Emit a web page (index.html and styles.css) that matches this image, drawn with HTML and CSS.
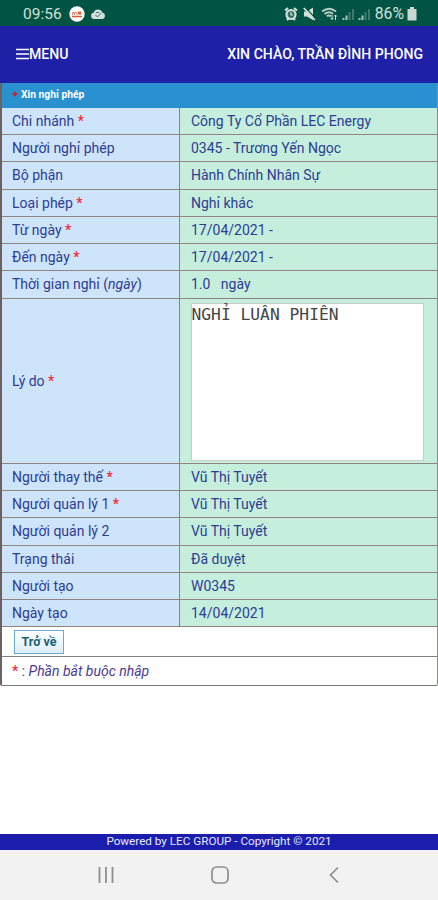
FILE: index.html
```html
<!DOCTYPE html>
<html lang="vi">
<head>
<meta charset="utf-8">
<title>Xin nghỉ phép</title>
<link rel="stylesheet" href="styles.css">
</head>
<body>
<div class="status">
  <span class="clock">09:56</span>
  <svg class="app" width="16" height="16" viewBox="0 0 16 16"><circle cx="8" cy="8" r="7.7" fill="#fff"/><path d="M3.500 9V6.500h2V9M6 6.500h2V9" fill="none" stroke="#c98a72"/><path d="M9 5.500h3v3H9z" fill="#e8602f"/><path d="M3 10.500h10" stroke="#dd5a33" stroke-width="1.500"/></svg>
  <svg class="cloud" width="16" height="12" viewBox="0 0 16 12"><path d="M4 11a3.300 3.300 0 0 1-.3-6.500A4.600 4.600 0 0 1 12.300 4.500 3.300 3.300 0 0 1 12 11z" fill="#d3e0da"/><path d="M5.500 7l2 2 3.500-4M6 4.500h3" fill="none" stroke="#3f7769"/></svg>
  <span class="spacer"></span>
  <svg class="alarm" width="14" height="14" viewBox="0 0 14 14"><path d="M1 3.500L4 1M13 3.500L10 1M3 13l1.500-2M11 13l-1.500-2" stroke="#d3e0da" stroke-width="2.200"/><circle cx="7" cy="7.500" r="4.500" fill="#326f60" stroke="#d3e0da" stroke-width="2.200"/><path d="M7 5v3h2" fill="none" stroke="#d3e0da" stroke-width="1.200"/></svg>
  <svg class="mute" width="13" height="14" viewBox="0 0 13 14"><path d="M1 4.500h3l6-4v12.500L4 9.500H1z" fill="#d3e0da"/><path d="M2 0l11 12" stroke="#015344" stroke-width="1.300"/><path d="M.8 1l11 12" stroke="#d3e0da" stroke-width="1.800"/></svg>
  <svg class="wifi" width="17" height="14" viewBox="0 0 17 14"><path d="M1 4.500Q8 -1 15 4.500M3.500 7Q8 3.500 12 7M5.800 9.300Q8 7.500 10 9.300" fill="none" stroke="#b9cec6" stroke-width="1.900"/><path d="M11 12.500V8M9.500 11l1.500 1.500L12.500 11M14.500 8v5M13 9.500L14.500 8 16 9.500" fill="none" stroke="#d3e0da"/></svg>
  <svg class="bars" width="13" height="14" viewBox="0 0 13 14"><path d="M1.500 13v-2M4.500 13V8.500" stroke="#a9c2b9" stroke-width="2"/><path d="M7.500 13V5M11 13V2" stroke="#3f7c6d" stroke-width="2"/></svg>
  <svg class="bars" width="13" height="14" viewBox="0 0 13 14"><path d="M1.500 13v-2M4.500 13V8.500" stroke="#a9c2b9" stroke-width="2"/><path d="M7.500 13V5M11 13V2" stroke="#3f7c6d" stroke-width="2"/></svg>
  <span class="percent">86%</span>
  <svg width="10" height="14" viewBox="0 0 10 14"><path d="M3 0h4v2h2.500v11.500h-9V2H3z" fill="#c9d9d2"/></svg>
</div>
<header class="topbar">
  <div class="menu"><svg width="14" height="12" viewBox="0 0 14 12"><path d="M0 1.500h13M0 6h13M0 10.500h13" stroke="#fff" stroke-width="1.600"/></svg><span>MENU</span></div>
  <div class="hello">XIN CHÀO, TRẦN ĐÌNH PHONG</div>
</header>
<main class="form">
  <div class="title"><svg width="6" height="6" viewBox="0 0 6 6"><path d="M3 .5v5M.5 3h5" stroke="#c9252d" stroke-width="1.800"/></svg><span>Xin nghỉ phép</span></div>
  <div class="row"><div class="label"><span>Chi nhánh <b>*</b></span></div><div class="value"><span>Công Ty Cổ Phần LEC Energy</span></div></div>
  <div class="row"><div class="label"><span>Người nghỉ phép</span></div><div class="value"><span>0345 - Trương Yến Ngọc</span></div></div>
  <div class="row"><div class="label"><span>Bộ phận</span></div><div class="value"><span>Hành Chính Nhân Sự</span></div></div>
  <div class="row"><div class="label"><span>Loại phép <b>*</b></span></div><div class="value"><span>Nghỉ khác</span></div></div>
  <div class="row"><div class="label"><span>Từ ngày <b>*</b></span></div><div class="value"><span>17/04/2021 -</span></div></div>
  <div class="row"><div class="label"><span>Đến ngày <b>*</b></span></div><div class="value"><span>17/04/2021 -</span></div></div>
  <div class="row"><div class="label"><span>Thời gian nghỉ (<i>ngày</i>)</span></div><div class="value"><span>1.0 &nbsp; ngày</span></div></div>
  <div class="row reason"><div class="label"><span>Lý do <b>*</b></span></div><div class="value"><div class="box">NGHỈ LUÂN PHIÊN</div></div></div>
  <div class="row"><div class="label"><span>Người thay thế <b>*</b></span></div><div class="value"><span>Vũ Thị Tuyết</span></div></div>
  <div class="row"><div class="label"><span>Người quản lý 1 <b>*</b></span></div><div class="value"><span>Vũ Thị Tuyết</span></div></div>
  <div class="row"><div class="label"><span>Người quản lý 2</span></div><div class="value"><span>Vũ Thị Tuyết</span></div></div>
  <div class="row"><div class="label"><span>Trạng thái</span></div><div class="value"><span>Đã duyệt</span></div></div>
  <div class="row"><div class="label"><span>Người tạo</span></div><div class="value"><span>W0345</span></div></div>
  <div class="row"><div class="label"><span>Ngày tạo</span></div><div class="value"><span>14/04/2021</span></div></div>
  <div class="actions"><button class="back">Trở về</button></div>
  <div class="note"><span><b>*</b> : <i>Phần bắt buộc nhập</i></span></div>
</main>
<footer class="footer">Powered by LEC GROUP - Copyright © 2021</footer>
<nav class="nav">
  <svg width="18" height="18" viewBox="0 0 18 18"><path d="M2.500 1v16M9 1v16M15.500 1v16" stroke="#8e8e8e" stroke-width="1.800"/></svg>
  <svg width="18" height="18" viewBox="0 0 18 18"><rect x="1" y="1" width="16" height="16" rx="4.500" fill="none" stroke="#8e8e8e" stroke-width="1.700"/></svg>
  <svg width="18" height="18" viewBox="0 0 18 18"><path d="M13 1.500L5.500 9l7.500 7.500" fill="none" stroke="#8e8e8e" stroke-width="1.700"/></svg>
</nav>
</body>
</html>
```
FILE: styles.css
```css
* { box-sizing: border-box; }
body {
  margin: 0;
  width: 438px;
  height: 900px;
  display: flex;
  flex-direction: column;
  background: #fff;
  font-family: Roboto, sans-serif;
  font-size: 14px;
  color: #2d3c92;
  overflow: hidden;
}
svg { display: block; flex: none; }
.status {
  height: 26px;
  flex: none;
  display: flex;
  align-items: center;
  padding: 1px 21px 0 23px;
  background: #015344;
  color: #d3e0da;
}
.clock { font-size: 15.5px; width: 46px; }
.cloud { margin-left: 5px; }
.spacer { flex: 1; }
.mute { margin-left: 5px; }
.wifi { margin-left: 5px; }
.bars { margin-left: 3px; }
.wifi + .bars { margin-left: 4px; }
.percent { font-size: 15.8px; margin: 0 3px 0 4px; }
.topbar {
  height: 57px;
  flex: none;
  display: flex;
  align-items: center;
  justify-content: space-between;
  padding: 0 15px 1px 16px;
  background: #1e20a8;
  color: #fff;
  font-weight: 500;
  font-size: 14.1px;
}
.menu { display: flex; align-items: center; }
.menu span { margin-left: -1px; }
.form {
  height: 603px;
  flex: none;
  display: flex;
  flex-direction: column;
  border-left: 2px solid #6d6262;
  border-right: 1px solid #8a8d85;
  border-bottom: 1px solid #777;
  border-radius: 0 0 2px 2px;
}
.title {
  height: 24.75px;
  display: flex;
  align-items: center;
  gap: 3px;
  padding: 0 0 2px 10px;
  background: #2a91d0;
  color: #fff;
  font-size: 10.3px;
  font-weight: 700;
}
.row {
  height: 27.25px;
  display: flex;
  border-bottom: 1px solid #8f8480;
}
.label, .value { display: flex; align-items: center; white-space: nowrap; }
.label {
  width: 178px;
  padding-left: 10px;
  background: #cee4fa;
  border-right: 1px solid #85857f;
}
.value { flex: 1; padding-left: 11px; background: #c5eedd; }
.reason { height: 165.25px; }
.box {
  width: 233px;
  height: 158px;
  margin-top: 2px;
  border: 1px solid #c3cec8;
  background: #fff;
  color: #444;
  font: 16.3px/22px "DejaVu Sans Mono", monospace;
  text-indent: -0.5px;
}
b { color: #f02a32; font-weight: 500; }
.actions {
  height: 30px;
  display: flex;
  align-items: center;
  padding-left: 12px;
  border-bottom: 1px solid #85807c;
}
.back {
  width: 50px;
  height: 24px;
  padding: 0;
  border: 1px solid #6ba9c6;
  background: linear-gradient(#fff, #dceefa);
  color: #206174;
  font: 700 12.5px Roboto, sans-serif;
}
.note { flex: 1; display: flex; align-items: center; padding: 0 0 1px 10px; color: #4a3a92; }
.footer {
  margin-top: 148px;
  height: 16px;
  flex: none;
  background: #1b1eac;
  color: #e6e8fa;
  font-size: 11.7px;
  line-height: 15px;
  text-align: center;
}
.nav {
  flex: 1;
  display: flex;
  align-items: center;
  justify-content: space-between;
  padding: 0 95px 0 97px;
  background: #f2f2f2;
}
```
